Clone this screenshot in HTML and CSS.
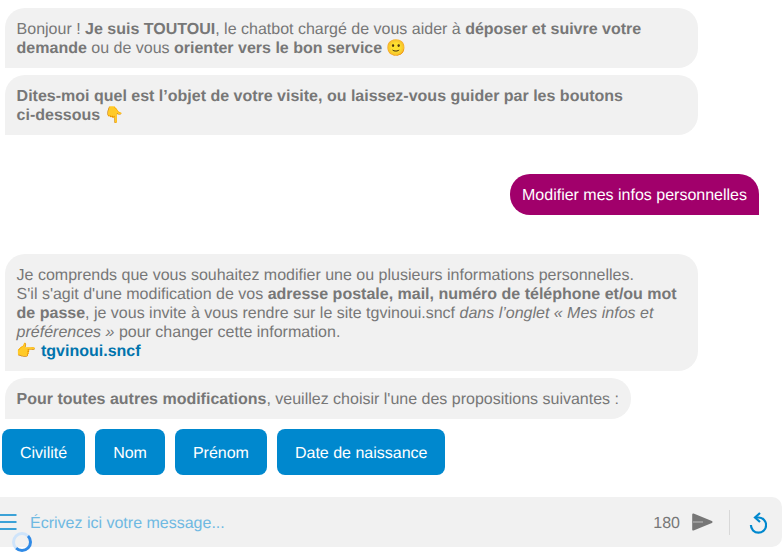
FILE: index.html
```html
<!DOCTYPE html>
<html lang="fr">
<head>
    <meta charset="UTF-8">
    <meta name="viewport" content="width=device-width, initial-scale=1.0">
    <title>Toutoui</title>
    <link rel="stylesheet" href="styles.css">
</head>
<body>
    <div class="chat">
        <div class="bubble bot full">
            Bonjour ! <b>Je suis TOUTOUI</b>, le chatbot chargé de vous aider à <b>déposer et suivre votre demande</b> ou de vous <b>orienter vers le bon service</b> 🙂
        </div>
        <div class="bubble bot full">
            <b>Dites-moi quel est l’objet de votre visite, ou laissez-vous guider par les boutons <span class="nowrap">ci-dessous</span></b> 👇
        </div>

        <div class="bubble user">Modifier mes infos personnelles</div>

        <div class="bubble bot full">
            Je comprends que vous souhaitez modifier une ou plusieurs informations personnelles.<br>
            S'il s'agit d'une modification de vos <b>adresse postale, mail, numéro de téléphone et/ou mot de passe</b>, je vous invite à vous rendre sur le site tgvinoui.sncf <i>dans l’onglet « Mes infos et préférences »</i> pour changer cette information.<br>
            👉 <a class="link" href="#">tgvinoui.sncf</a>
        </div>
        <div class="bubble bot">
            <b>Pour toutes autres modifications</b>, veuillez choisir l'une des propositions suivantes :
        </div>

        <div class="choices">
            <button class="choice">Civilité</button>
            <button class="choice">Nom</button>
            <button class="choice">Prénom</button>
            <button class="choice">Date de naissance</button>
        </div>
    </div>

    <div class="input-bar">
        <svg class="menu-icon" width="17" height="16" viewBox="0 0 17 16">
            <path d="M0 1h16.500M0 8h16.500M0 15h16.500" stroke="#0088ce" stroke-width="1.6" fill="none"/>
        </svg>
        <div class="placeholder">Écrivez ici votre message...</div>
        <div class="counter">180</div>
        <svg class="send-icon" width="21" height="18" viewBox="0 0 21 18">
            <path d="M1.200 1.500L19.500 9L1.200 16.500Z" fill="#777" stroke="#777" stroke-width="2" stroke-linejoin="round"/>
            <path d="M1 9H11" stroke="#aaa" stroke-width="1.400"/>
        </svg>
        <div class="divider"></div>
        <svg class="reset-icon" width="18" height="22" viewBox="0 0 18 22">
            <path d="M6 5.500H9.500A7.600 7.600 0 1 1 1.900 13" stroke="#0088ce" stroke-width="2.200" fill="none"/>
            <path d="M11 1L6 5.500L11 10" stroke="#0088ce" stroke-width="2.200" fill="none"/>
        </svg>
        <div class="spinner"></div>
    </div>
</body>
</html>
```

FILE: styles.css
```css
* {
    margin: 0;
    padding: 0;
    box-sizing: border-box;
}
body {
    font-family: "Liberation Sans", Arial, "Noto Color Emoji", sans-serif;
    font-size: 16px;
    line-height: 19px;
    color: #777;
    background: white;
    min-height: 100vh;
    text-rendering: geometricPrecision;
}
.chat {
    display: flex;
    flex-direction: column;
    align-items: flex-start;
    padding-top: 8px;
}
.bubble {
    padding: 12px 12px 10px 11.6px;
    border-radius: 20px 20px 20px 0;
}
.bot {
    margin-left: 5px;
    margin-bottom: 7px;
    background-color: #f1f1f1;
}
.full {
    width: 693px;
}
.nowrap {
    white-space: nowrap;
}
.user {
    align-self: flex-end;
    margin: 32px 25px 39px 0;
    background-color: #a1006b;
    color: white;
    border-radius: 20px 20px 0 20px;
}
.link {
    color: #0074ad;
    font-weight: bold;
    text-decoration: none;
}
.choices {
    display: flex;
    gap: 10px;
    margin-left: 2px;
    margin-top: 3px;
}
.choice {
    height: 46px;
    padding: 4px 18px 0;
    border: none;
    border-radius: 8px;
    background-color: #0088ce;
    color: white;
    font-family: inherit;
    font-size: 16px;
    text-rendering: inherit;
}
.input-bar {
    position: relative;
    display: flex;
    align-items: center;
    width: 782px;
    height: 50px;
    margin-top: 22px;
    background-color: #f1f1f1;
    border-radius: 0 10px 10px 0;
}
.placeholder {
    flex: 1;
    margin-left: 13px;
    padding-top: 2px;
    color: #6fb9e2;
}
.counter {
    margin-right: 12px;
    padding-top: 2px;
}
.send-icon {
    margin-right: 16px;
}
.divider {
    width: 1px;
    height: 25px;
    margin-right: 19px;
    background-color: #d8d8d8;
}
.reset-icon {
    margin-top: 2px;
    margin-right: 15px;
}
.spinner {
    position: absolute;
    left: 12px;
    top: 35px;
    width: 20px;
    height: 20px;
    border: 3px solid #cfe4fa;
    border-right-color: #2f8ae6;
    border-bottom-color: #2f8ae6;
    border-radius: 50%;
}
```
